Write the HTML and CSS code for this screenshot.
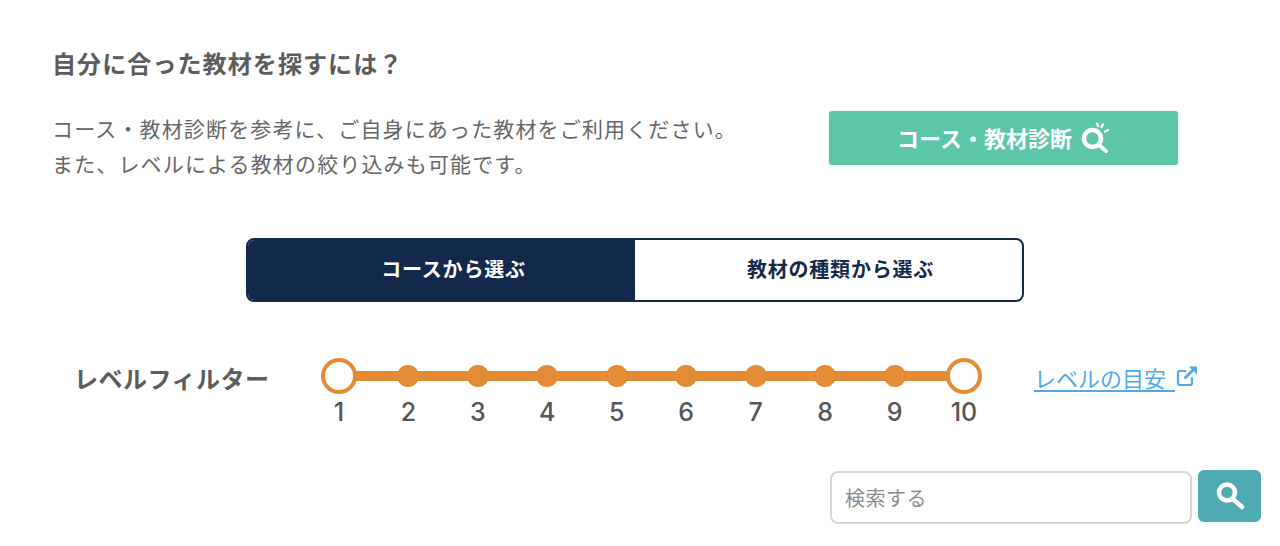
FILE: index.html
```html
<!DOCTYPE html>
<html lang="ja">
<head>
  <meta charset="UTF-8" />
  <meta name="viewport" content="width=device-width, initial-scale=1.0" />
  <title>教材を探す</title>
  <link rel="stylesheet" href="styles.css">
</head>
<body>
  <div class="container">
    <h2 class="heading">自分に合った教材を探すには？</h2>

    <div class="intro">
      <p class="intro-text">コース・教材診断を参考に、ご自身にあった教材をご利用ください。<br>また、レベルによる教材の絞り込みも可能です。</p>
      <a class="diagnosis-btn" href="#">
        コース・教材診断
        <svg class="diagnosis-icon" viewBox="0 0 30 32" width="30" height="32" fill="none" stroke="#fff" stroke-linecap="round">
          <circle cx="12.500" cy="17.500" r="8.500" stroke-width="4.500"/>
          <path d="M19 24l7 6" stroke-width="4"/>
          <path d="M17 2.500l1 2.500M23 3.500l-1.500 2.500M28 9l-3 1.500" stroke-width="2.400"/>
        </svg>
      </a>
    </div>

    <div class="tabs">
      <a class="tab active" href="#">コースから選ぶ</a>
      <a class="tab" href="#">教材の種類から選ぶ</a>
    </div>

    <div class="filter">
      <div class="filter-label">レベルフィルター</div>
      <div class="levels">
        <div class="level end"><span class="dot"></span><span class="num">1</span></div>
        <div class="level"><span class="dot"></span><span class="num">2</span></div>
        <div class="level"><span class="dot"></span><span class="num">3</span></div>
        <div class="level"><span class="dot"></span><span class="num">4</span></div>
        <div class="level"><span class="dot"></span><span class="num">5</span></div>
        <div class="level"><span class="dot"></span><span class="num">6</span></div>
        <div class="level"><span class="dot"></span><span class="num">7</span></div>
        <div class="level"><span class="dot"></span><span class="num">8</span></div>
        <div class="level"><span class="dot"></span><span class="num">9</span></div>
        <div class="level end"><span class="dot"></span><span class="num">10</span></div>
      </div>
      <a class="level-link" href="#"><span class="level-link-text">レベルの目安</span><svg viewBox="0 0 24 24" width="24" height="24" fill="none" stroke="#4fa9e8" stroke-width="2.200"><path d="M17 13.500V19a2 2 0 0 1-2 2H5a2 2 0 0 1-2-2V9a2 2 0 0 1 2-2h6"/><path d="M9.500 14.500L20 4" stroke-width="2.800"/><path d="M14 2.500h8v8z" fill="#4fa9e8" stroke="none"/></svg></a>
    </div>

    <div class="search">
      <input class="search-input" type="text" placeholder="検索する" />
      <button class="search-btn">
        <svg viewBox="0 0 32 32" width="32" height="32" fill="none" stroke="#fff" stroke-linecap="round">
          <circle cx="13" cy="12.500" r="8" stroke-width="4.500"/>
          <path d="M19 19l9 8" stroke-width="4.500"/>
        </svg>
      </button>
    </div>
  </div>
</body>
</html>
```

FILE: styles.css
```css
* {
  box-sizing: border-box;
}
body {
  margin: 0;
  background-color: #fff;
  color: #555;
  font-family: "Noto Sans CJK JP", "Noto Sans", sans-serif;
}
a {
  text-decoration: none;
}
.container {
  width: 1280px;
  height: 546px;
  padding-top: 44px;
  overflow: hidden;
}
.heading {
  margin: 0 0 0 52px;
  font-size: 24px;
  line-height: 38px;
  letter-spacing: 1.100px;
  font-weight: 700;
  color: #5c5c5c;
}
.intro {
  display: flex;
  align-items: flex-start;
  margin-top: 29px;
  padding-left: 52px;
}
.intro-text {
  width: 777px;
  margin: 0;
  font-size: 21px;
  line-height: 35px;
  letter-spacing: 1.150px;
  color: #666;
  white-space: nowrap;
}
.diagnosis-btn {
  display: flex;
  align-items: center;
  justify-content: center;
  gap: 8px;
  width: 349px;
  height: 54px;
  padding-bottom: 3px;
  background-color: #5cc6a9;
  border-radius: 3px;
  box-shadow: 0 0 2px rgba(0,0,0,0.15);
  color: #fff;
  font-size: 22px;
  font-weight: 700;
}
.diagnosis-icon {
  margin-top: 0;
}
.tabs {
  display: flex;
  width: 778px;
  height: 64px;
  margin: 57px 0 0 246px;
  border: 2.500px solid #13294b;
  border-radius: 8px;
  overflow: hidden;
}
.tab {
  display: flex;
  align-items: center;
  justify-content: center;
  flex: 1;
  padding: 0 0 3px 24px;
  color: #13294b;
  font-size: 20px;
  letter-spacing: 0.800px;
  font-weight: 700;
}
.tab.active {
  background-color: #13294b;
  color: #fff;
}
.filter {
  display: flex;
  align-items: flex-start;
  margin-top: 54px;
  padding-left: 74px;
}
.filter-label {
  width: 245px;
  margin-top: 4px;
  font-size: 24px;
  line-height: 36px;
  letter-spacing: 0.500px;
  font-weight: 700;
  color: #5c5c5c;
  white-space: nowrap;
}
.levels {
  position: relative;
  display: flex;
  justify-content: space-between;
  width: 665px;
}
.levels::before {
  content: "";
  position: absolute;
  top: 15px;
  left: 20px;
  right: 20px;
  height: 10px;
  background-color: #e38c35;
}
.level {
  position: relative;
  display: flex;
  flex-direction: column;
  align-items: center;
  width: 40px;
}
.dot {
  width: 22px;
  height: 22px;
  margin: 9px 0;
  border-radius: 50%;
  background-color: #e38c35;
}
.level.end .dot {
  width: 36px;
  height: 36px;
  margin: 2px 0;
  background-color: #fff;
  border: 4.500px solid #e38c35;
}
.num {
  font-family: "Inter", "Noto Sans", sans-serif;
  margin-top: 1px;
  font-size: 25px;
  line-height: 30px;
  font-weight: 500;
  color: #555;
}
.level-link {
  display: flex;
  align-items: center;
  margin: 4px 0 0 50px;
  color: #4fa9e8;
  font-size: 22px;
  line-height: 34px;
}
.level-link-text {
  padding-right: 9px;
  border-bottom: 2px solid #4fa9e8;
  white-space: nowrap;
  line-height: 26px;
  margin-top: 4px;
}
.search {
  display: flex;
  align-items: flex-start;
  gap: 6px;
  margin-top: 43px;
  padding-left: 830px;
}
.search-input {
  width: 362px;
  height: 53px;
  margin-top: 1px;
  padding: 0 13px;
  border: 2px solid #d5d5d5;
  border-radius: 8px;
  font-family: inherit;
  font-size: 20px;
  letter-spacing: 0.500px;
  color: #555;
}
.search-input::placeholder {
  color: #8c8c8c;
  opacity: 1;
}
.search-btn {
  display: flex;
  align-items: center;
  justify-content: center;
  width: 63px;
  height: 52px;
  padding: 0;
  border: none;
  border-radius: 6px;
  background-color: #4eaab3;
}
```
